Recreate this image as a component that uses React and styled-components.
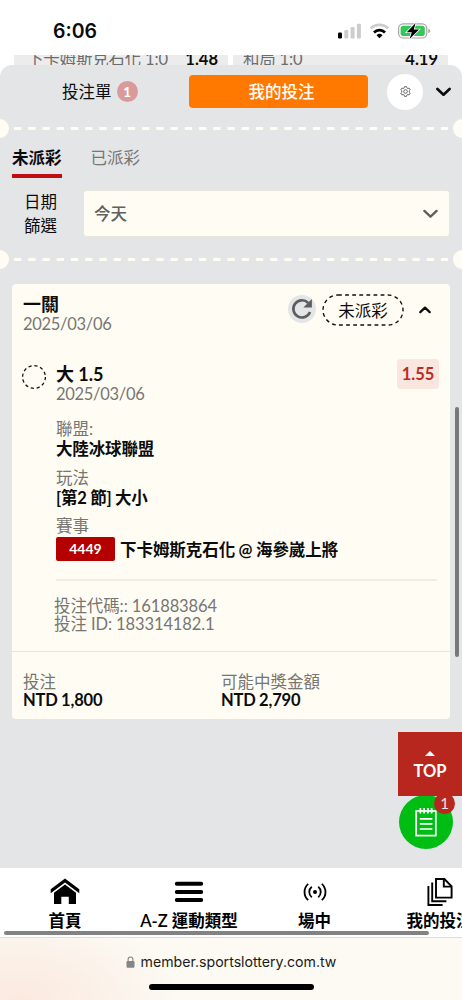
import styled, { createGlobalStyle } from "styled-components";

const GlobalStyle = createGlobalStyle`
  * {
    box-sizing: border-box;
  }

  body {
    margin: 0;
    overflow: hidden;
    background: #fff;
    color: #0c0c0c;
    font-family: Lato, "Noto Sans CJK TC", sans-serif;
    font-size: 16.5px;
  }
`;

const StatusIcons = () => (
  <svg width="96" height="18" viewBox="0 0 96 18">
    <rect x="1" y="10.5" width="4" height="6" rx="1.2" fill="#000" />
    <rect x="7.3" y="8" width="4" height="8.5" rx="1.2" fill="#ccc" />
    <rect x="13.6" y="5" width="4" height="11.5" rx="1.2" fill="#ccc" />
    <rect x="19.9" y="1.7" width="4" height="14.8" rx="1.2" fill="#ccc" />
    <g fill="none" strokeWidth="2.8">
      <path d="M33.8 6.6 a12.2 12.2 0 0 1 17.4 0" stroke="#ccc" />
      <path d="M37 10.4 a7.8 7.8 0 0 1 11 0" stroke="#000" />
    </g>
    <path d="M42.5 16.3 l-3 -3.1 a4.4 4.4 0 0 1 6 0z" fill="#000" />
    <rect x="61.6" y="1.8" width="28.2" height="14.2" rx="4.6" fill="none" stroke="#a6a6a6" strokeWidth="1.2" />
    <rect x="63.6" y="3.8" width="24.2" height="10.2" rx="2.8" fill="#34c759" />
    <path d="M91.3 6.8 q2 .6 2 2.2 t-2 2.2z" fill="#a6a6a6" />
    <path d="M78.6 1 L69.8 10.2 h5 L72.6 17 L82 7.5 h-5.2z" fill="#000" stroke="#fff" strokeWidth="1.6" paintOrder="stroke" />
  </svg>
);

const Chevron = ({ color = "#0c0c0c", up, w = 14, stroke = 2.4 }) => (
  <svg width={w} height={w * 0.64} viewBox="0 0 14 9" fill="none" stroke={color} strokeWidth={stroke} strokeLinecap="round" strokeLinejoin="round">
    <path d={up ? "M1.5 7.2 L7 1.9 L12.5 7.2" : "M1.3 1.8 L7 7.2 L12.7 1.8"} />
  </svg>
);

const GearIcon = () => (
  <svg width="11" height="11" viewBox="0 0 24 24" fill="none" stroke="#444" strokeWidth="1.7">
    <path d="M9.6 1.5h4.8l.8 3.1 1.6.9 3.1-.9 2.4 4.1-2.3 2.3v2l2.3 2.3-2.4 4.1-3.1-.9-1.6.9-.8 3.1H9.6l-.8-3.1-1.6-.9-3.1.9-2.4-4.1L4 13v-2L1.7 8.7l2.4-4.1 3.1.9 1.6-.9z" />
    <circle cx="12" cy="12" r="4" />
  </svg>
);

const RefreshIcon = () => (
  <svg width="22" height="22" viewBox="0 0 22 22">
    <path d="M19 14 A8.6 8.6 0 1 1 17.2 5" fill="none" stroke="#5c5d60" strokeWidth="2.6" />
    <path d="M20.9 1 V9.4 H12.4z" fill="#5c5d60" />
  </svg>
);

const NoteIcon = () => (
  <svg width="22" height="30" viewBox="0 0 22 30" fill="none" stroke="#fff" strokeWidth="1.7">
    <rect x="1.2" y="4" width="19.6" height="24.6" />
    <path d="M5.4 1v5.4M9.1 1v5.4M12.9 1v5.4M16.6 1v5.4" />
    <path d="M4.8 11.8h12.6M4.8 16.8h12.6M4.8 22h12.6" />
  </svg>
);

const HomeIcon = () => (
  <svg width="30" height="28" viewBox="0 0 30 28">
    <path d="M0.7 15.2 V11.2 L15 0.4 L29.3 11.2 V15.2 L15 4.6z" />
    <path d="M4 14.8 L15 6.6 L26 14.8 V26 H18.8 V18.7 H11.3 V26 H4z" />
  </svg>
);

const MenuIcon = () => (
  <svg width="30" height="28" viewBox="0 0 30 28" stroke="#000" strokeWidth="4" strokeLinecap="round">
    <path d="M2.8 5.7h24.4M2.8 13.9h24.4M2.8 22h24.4" />
  </svg>
);

const LiveIcon = () => (
  <svg width="24" height="28" viewBox="0 0 24 28" fill="none" stroke="#000" strokeWidth="1.8">
    <circle cx="12" cy="14" r="2" fill="#000" stroke="none" />
    <path d="M8.8 8.8 a6.6 6.6 0 0 0 0 10.4M15.2 8.8 a6.6 6.6 0 0 1 0 10.4" />
    <path d="M5.2 5.8 a11 11 0 0 0 0 16.4M18.8 5.8 a11 11 0 0 1 0 16.4" />
  </svg>
);

const PagesIcon = () => (
  <svg width="26" height="28" viewBox="0 0 26 28" fill="none" stroke="#000" strokeWidth="1.9">
    <path d="M9 1 H17.4 L24.6 8.4 V19.6 H9z" />
    <path d="M16.8 1 V8.6 H24.4" />
    <path d="M5.2 4.4 V23.2 H19.4M1.4 8 V27 H15.6" />
  </svg>
);

const LockIcon = () => (
  <svg width="9" height="12" viewBox="0 0 9 12">
    <rect x="0.5" y="5" width="8" height="6.8" rx="1.2" fill="#858585" />
    <path d="M2.1 5.3V3.4a2.4 2.4 0 0 1 4.8 0v1.9" fill="none" stroke="#858585" strokeWidth="1.1" />
  </svg>
);

const DashRule = () => (
  <Rule>
    <Notch />
    <svg width="434" height="3">
      <path d="M0 1.5H434" stroke="#fffdf3" strokeWidth="2.8" strokeDasharray="7.3 6.93" />
    </svg>
    <Notch />
  </Rule>
);

const fields = [
  { label: "聯盟:", value: "大陸冰球聯盟" },
  { label: "玩法", value: "[第2 節] 大小" },
];

const App = () => {
  return (
    <Screen>
      <GlobalStyle />
      <StatusBar>
        <Clock>6:06</Clock>
        <StatusIcons />
      </StatusBar>

      <OddsStrip>
        <OddsCell>
          <span>下卡姆斯克石化 1:0</span>
          <b>1.48</b>
        </OddsCell>
        <OddsCell $second>
          <span>和局 1:0</span>
          <b>4.19</b>
        </OddsCell>
      </OddsStrip>

      <Panel>
        <PanelHeader>
          <SlipTab>
            投注單 <Count>1</Count>
          </SlipTab>
          <MyBets>我的投注</MyBets>
          <GearButton>
            <GearIcon />
          </GearButton>
          <Chevron w={15} stroke={2.5} />
        </PanelHeader>

        <DashRule />

        <Tabs>
          <Tab $active>未派彩</Tab>
          <Tab>已派彩</Tab>
        </Tabs>

        <Filter>
          <FilterLabel>
            日期
            <br />
            篩選
          </FilterLabel>
          <Select>
            今天
            <Chevron color="#5f5f5d" w={15} stroke={2.2} />
          </Select>
        </Filter>

        <DashRule />

        <Card>
          <CardHeader>
            <div>
              <Title>一關</Title>
              <DateText>2025/03/06</DateText>
            </div>
            <Actions>
              <Refresh>
                <RefreshIcon />
              </Refresh>
              <Status>
                <svg width="82" height="32">
                  <rect x="1" y="1" width="80" height="30" rx="15" fill="none" stroke="#111" strokeWidth="1.4" strokeDasharray="3.8 3.3" />
                </svg>
                <span>未派彩</span>
              </Status>
              <Chevron up w={12} stroke={2.6} />
            </Actions>
          </CardHeader>

          <Bet>
            <svg width="26" height="26">
              <circle cx="13" cy="13" r="11.4" fill="none" stroke="#111" strokeWidth="1.3" strokeDasharray="3.2 2.77" />
            </svg>
            <div>
              <Title>大 1.5</Title>
              <DateText>2025/03/06</DateText>
            </div>
            <Odds>1.55</Odds>
          </Bet>

          <Details>
            {fields.map((f) => (
              <Field key={f.label}>
                <Muted>{f.label}</Muted>
                <Strong>{f.value}</Strong>
              </Field>
            ))}
            <Muted>賽事</Muted>
            <Match>
              <MatchNo>4449</MatchNo>
              <MatchName>下卡姆斯克石化 @ 海參崴上將</MatchName>
            </Match>
          </Details>

          <Codes>
            <div>投注代碼:: 161883864</div>
            <div>投注 ID: 183314182.1</div>
          </Codes>

          <Totals>
            <div>
              <Muted $h={19}>投注</Muted>
              <Strong $h={17}>NTD 1,800</Strong>
            </div>
            <div>
              <Muted $h={19}>可能中獎金額</Muted>
              <Strong $h={17}>NTD 2,790</Strong>
            </div>
          </Totals>
        </Card>
        <PanelScroll />
      </Panel>

      <Floating>
        <SlipButton>
          <NoteIcon />
        </SlipButton>
        <TopButton>
          <svg width="10" height="5">
            <path d="M0 5 L5 0 L10 5z" fill="#fff" />
          </svg>
          TOP
        </TopButton>
        <SlipCount>1</SlipCount>
      </Floating>

      <Nav>
        <NavItem $w={130}>
          <HomeIcon />
          首頁
        </NavItem>
        <NavItem $w={118}>
          <MenuIcon />
          A-Z 運動類型
        </NavItem>
        <NavItem $w={133}>
          <LiveIcon />
          場中
        </NavItem>
        <NavItem $w={117}>
          <PagesIcon />
          我的投注
        </NavItem>
        <NavScroll />
      </Nav>

      <Browser>
        <Address>
          <LockIcon />
          member.sportslottery.com.tw
        </Address>
        <HomeBar />
      </Browser>
    </Screen>
  );
};

const Screen = styled.div`
  position: relative;
  display: flex;
  flex-direction: column;
  width: 462px;
  height: 1000px;
  overflow: hidden;
`;

const StatusBar = styled.header`
  display: flex;
  align-items: flex-start;
  justify-content: space-between;
  height: 55px;
  padding: 22px 29px 0 53px;
`;

const Clock = styled.div`
  font-family: Inter, sans-serif;
  font-size: 19.5px;
  font-weight: 600;
  line-height: 18px;
`;

const OddsStrip = styled.div`
  display: grid;
  grid-template-columns: 214px 215px;
  gap: 5px;
  height: 10px;
  padding: 0 14px;
  overflow: hidden;
`;

const OddsCell = styled.div`
  display: flex;
  justify-content: space-between;
  height: 10px;
  padding: 0 10px 0 ${({ $second }) => ($second ? "10px" : "13px")};
  background: #ececec;
  color: #6c6c6c;
  letter-spacing: -0.2px;
  line-height: 8px;
  overflow: hidden;

  b {
    color: #0c0c0c;
    letter-spacing: 0;
  }
`;

const Panel = styled.main`
  position: relative;
  flex: none;
  height: 803px;
  background: #e4e5e7;
  border-radius: 12px 12px 0 0;
`;

const PanelHeader = styled.div`
  display: flex;
  align-items: center;
  height: 53px;
  padding-left: 62px;
`;

const SlipTab = styled.div`
  display: flex;
  align-items: center;
  gap: 5px;
  width: 127px;
  line-height: 20px;
`;

const Count = styled.span`
  width: 21px;
  height: 21px;
  border-radius: 50%;
  background: #d99a9c;
  color: #fff;
  font-size: 14px;
  font-weight: 700;
  line-height: 21px;
  text-align: center;
`;

const MyBets = styled.button`
  width: 179px;
  height: 33px;
  margin-right: 19px;
  padding: 0 0 0 6px;
  border: 0;
  border-radius: 4px;
  background: #ff7800;
  color: #fff;
  font: inherit;
  font-weight: 500;
  line-height: 32px;
`;

const GearButton = styled.div`
  display: flex;
  align-items: center;
  justify-content: center;
  width: 36px;
  height: 36px;
  margin-right: 13px;
  border-radius: 50%;
  background: #fff;
`;

const Rule = styled.div`
  display: flex;
  align-items: center;
  justify-content: space-between;
  height: 20px;
  margin: 0 -10px;
`;

const Notch = styled.span`
  width: 19px;
  height: 19px;
  border-radius: 50%;
  background: #fffdf3;
`;

const Tabs = styled.div`
  display: flex;
  gap: 29px;
  height: 53px;
  padding: 4px 12px 0;
`;

const Tab = styled.div`
  height: 36px;
  border-bottom: 4px solid ${({ $active }) => ($active ? "#c20d12" : "transparent")};
  color: ${({ $active }) => ($active ? "#0c0c0c" : "#767676")};
  font-weight: ${({ $active }) => ($active ? 700 : 400)};
  line-height: 33px;
`;

const Filter = styled.div`
  display: flex;
  height: 58px;
  padding: 0 13px 0 24px;
`;

const FilterLabel = styled.div`
  width: 60px;
  margin-top: -1px;
  line-height: 24px;
`;

const Select = styled.div`
  flex: 1;
  display: flex;
  align-items: center;
  justify-content: space-between;
  height: 45px;
  padding: 0 11px 0 10px;
  border-radius: 3px;
  background: #fffdf3;
  box-shadow: 0 0 0 1px #e9e7dd;
  color: #5f5f5d;
  font-weight: 500;
  line-height: 20px;
`;

const Card = styled.section`
  height: 435px;
  margin: 15px 12px 0;
  border-radius: 4px;
  background: #fffdf3;
`;

const CardHeader = styled.div`
  display: flex;
  justify-content: space-between;
  height: 80px;
  padding: 10px 19px 0 11px;
`;

const Title = styled.div`
  height: 20px;
  font-size: 18px;
  font-weight: 700;
  line-height: 20px;
`;

const Muted = styled.div`
  height: ${({ $h = 20 }) => $h}px;
  color: #767673;
  line-height: ${({ $h = 20 }) => $h}px;
`;

const DateText = styled(Muted)`
  letter-spacing: -0.3px;
`;

const Strong = styled.div`
  font-weight: 700;
  letter-spacing: -0.15px;
  line-height: ${({ $h = 20 }) => $h}px;
  word-spacing: -0.5px;
`;

const MatchName = styled(Strong)`
  padding-top: 1px;
  letter-spacing: -0.05px;
`;

const Actions = styled.div`
  display: flex;
  align-items: center;
  height: 32px;
`;

const Refresh = styled.div`
  display: flex;
  align-items: center;
  justify-content: center;
  width: 28px;
  height: 28px;
  margin: -3px 6px 0 0;
  border-radius: 50%;
  background: #e4e5e7;
`;

const Status = styled.div`
  display: grid;
  place-items: center;
  margin-right: 15px;
  line-height: 20px;

  > * {
    grid-area: 1 / 1;
  }

  span {
    padding-top: 2px;
  }
`;

const Bet = styled.div`
  display: flex;
  height: 55px;
  padding: 0 11px 0 9px;

  > svg {
    margin-right: 9px;
  }
`;

const Odds = styled.div`
  width: 42px;
  height: 30px;
  margin: -5px 0 0 auto;
  border-radius: 4px;
  background: #f8e6df;
  color: #bd2a20;
  font-weight: 700;
  line-height: 31px;
  text-align: center;
`;

const Details = styled.div`
  height: 162px;
  margin: 0 13px 0 44px;
  border-bottom: 2px solid #efece6;
`;

const Field = styled.div`
  height: 48.5px;
`;

const Match = styled.div`
  display: flex;
  align-items: center;
  gap: 5px;
  height: 24px;
  margin-top: 1px;
`;

const MatchNo = styled.span`
  width: 59px;
  height: 24px;
  border-radius: 2px;
  background: #b50000;
  color: #fff;
  font-size: 14px;
  font-weight: 700;
  line-height: 24px;
  text-align: center;
`;

const Codes = styled.div`
  height: 70px;
  padding: 15.5px 0 0 42px;
  color: #767673;
  letter-spacing: -0.1px;
  line-height: 18px;
`;

const Totals = styled.div`
  display: grid;
  grid-template-columns: 198px 1fr;
  padding: 21px 0 0 11px;
  border-top: 1px solid #e6e4dd;
`;

const PanelScroll = styled.div`
  position: absolute;
  top: 342px;
  right: 3px;
  width: 4px;
  height: 250px;
  border-radius: 2px;
  background: #77787a;
`;

const Floating = styled.div`
  position: absolute;
  top: 732px;
  right: 0;
  width: 64px;
  height: 118px;
`;

const TopButton = styled.div`
  position: relative;
  display: flex;
  flex-direction: column;
  align-items: center;
  gap: 8px;
  height: 64px;
  padding-top: 19px;
  background: #b8271d;
  color: #fff;
  font-weight: 700;
  line-height: 15px;
`;

const SlipButton = styled.div`
  position: absolute;
  top: 63px;
  left: 1px;
  display: flex;
  align-items: center;
  justify-content: center;
  width: 54px;
  height: 54px;
  border-radius: 50%;
  background: #00bd14;
`;

const SlipCount = styled.div`
  position: absolute;
  top: 61px;
  left: 36px;
  width: 21px;
  height: 21px;
  border-radius: 50%;
  background: #b8271d;
  color: #f1e4e2;
  font-size: 15px;
  line-height: 21px;
  text-align: center;
`;

const Nav = styled.nav`
  position: relative;
  display: flex;
  flex: none;
  height: 70px;
  background: #fff;
  border-bottom: 1px solid #dededc;
`;

const NavItem = styled.div`
  flex: none;
  display: flex;
  flex-direction: column;
  align-items: center;
  width: ${({ $w }) => $w}px;
  padding-top: 10px;
  color: #000;
  font-weight: 600;
  line-height: 22px;
  white-space: nowrap;

  svg {
    flex: none;
    margin-bottom: 4px;
  }
`;

const NavScroll = styled.div`
  position: absolute;
  left: 4px;
  bottom: 2px;
  width: 425px;
  height: 4px;
  border-radius: 2px;
  background: #828282;
`;

const Browser = styled.footer`
  display: flex;
  flex-direction: column;
  align-items: center;
  height: 62px;
  padding-top: 13px;
  background: radial-gradient(ellipse 160px 90px at 20px 62px, #fbe9df, #fbf1e9 50%, transparent), #fcfaf3;
`;

const Address = styled.div`
  display: flex;
  align-items: center;
  gap: 6px;
  color: #1c1c1a;
  font-family: Inter, sans-serif;
  font-size: 14.15px;
  line-height: 21px;
`;

const HomeBar = styled.div`
  width: 165px;
  height: 6px;
  margin-top: 12px;
  border-radius: 3px;
  background: #000;
`;

export default App;
